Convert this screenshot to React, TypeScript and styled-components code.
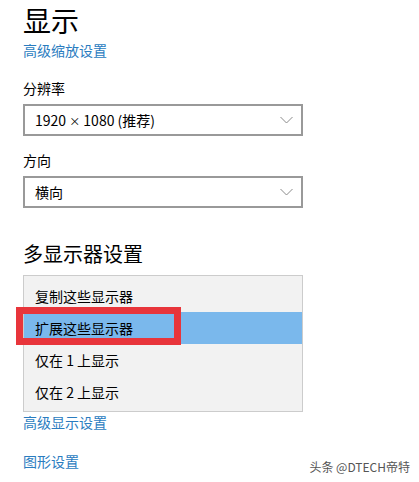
import React from 'react';
import styled, { createGlobalStyle } from 'styled-components';

const GlobalStyle = createGlobalStyle`
  body {
    margin: 0;
    background: #ffffff;
    font-family: "Noto Sans CJK SC", "Noto Sans", sans-serif;
    color: #000000;
  }
`;

const Page = styled.div`
  position: relative;
  width: 419px;
  height: 482px;
  overflow: hidden;
  padding: 0 0 0 23px;
  box-sizing: border-box;
`;

const Title = styled.h1<{ $size: number; $line: number; $gap: number }>`
  margin: ${(p) => p.$gap}px 0 0;
  font-size: ${(p) => p.$size}px;
  line-height: ${(p) => p.$line}px;
  font-weight: 400;
`;

const Link = styled.div<{ $gap?: number }>`
  margin-top: ${(p) => p.$gap ?? 0}px;
  font-size: 14px;
  line-height: 20px;
  color: #2a7cbf;
`;

const Label = styled.div<{ $gap: number }>`
  margin-top: ${(p) => p.$gap}px;
  font-size: 14px;
  line-height: 20px;
`;

const Select = styled.div`
  margin-top: 6px;
  width: 280px;
  height: 32px;
  box-sizing: border-box;
  border: 2px solid #999999;
  display: flex;
  align-items: center;
  justify-content: space-between;
  padding: 0 8px 0 10px;
  font-size: 14px;
`;

const Times = styled.span`
  font-size: 11px;
`;

const Menu = styled.div`
  margin-top: 6px;
  width: 280px;
  box-sizing: border-box;
  border: 1px solid #cccccc;
  background: #f2f2f2;
  padding: 4px 0 3px;
`;

const Item = styled.div<{ $active?: boolean }>`
  position: relative;
  height: 32px;
  display: flex;
  align-items: center;
  padding-left: 11px;
  font-size: 14px;
  background: ${(p) => (p.$active ? '#7ab8ec' : 'transparent')};
`;

const Marker = styled.div`
  position: absolute;
  left: -8px;
  top: -5px;
  width: 165px;
  height: 38px;
  box-sizing: border-box;
  border: 7px solid #e8353b;
`;

const Watermark = styled.div`
  position: absolute;
  right: 9px;
  top: 458px;
  font-size: 12px;
  line-height: 18px;
  color: #555555;
`;

const Chevron = () => (
  <svg width="13" height="8" viewBox="0 0 13 8">
    <path d="M0.5 1 L6.5 7 L12.5 1" fill="none" stroke="#8a8a8a" strokeWidth="1" />
  </svg>
);

const modes = ['复制这些显示器', '扩展这些显示器', '仅在 1 上显示', '仅在 2 上显示'];

export default function App() {
  return (
    <Page>
      <GlobalStyle />
      <Title $size={28} $line={40} $gap={0}>显示</Title>
      <Link>高级缩放设置</Link>
      <Label $gap={18}>分辨率</Label>
      <Select>
        <span>
          1920 <Times>×</Times> 1080 (推荐)
        </span>
        <Chevron />
      </Select>
      <Label $gap={14}>方向</Label>
      <Select>
        <span>横向</span>
        <Chevron />
      </Select>
      <Title $size={20} $line={30} $gap={31}>多显示器设置</Title>
      <Menu>
        {modes.map((m, i) => (
          <Item key={m} $active={i === 1}>
            {m}
            {i === 1 && <Marker />}
          </Item>
        ))}
      </Menu>
      <Link>高级显示设置</Link>
      <Link $gap={19}>图形设置</Link>
      <Watermark>头条 @DTECH帝特</Watermark>
    </Page>
  );
}
